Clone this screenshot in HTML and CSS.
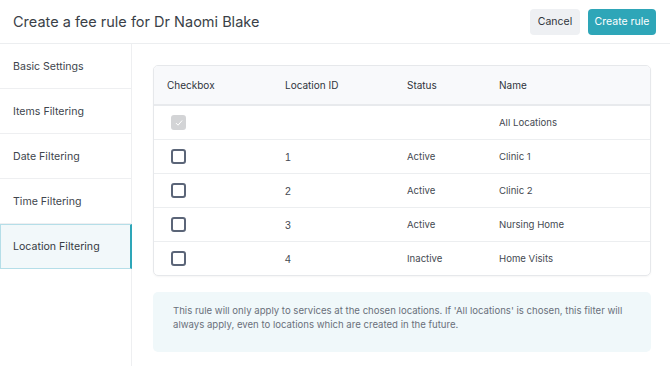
FILE: index.html
```html
<!DOCTYPE html>
<html lang="en">
<head>
    <meta charset="UTF-8">
    <meta name="viewport" content="width=device-width, initial-scale=1.0">
    <title>Create a fee rule</title>
    <link rel="stylesheet" href="styles.css">
</head>
<body>
    <div class="header">
        <h1>Create a fee rule for Dr Naomi Blake</h1>
        <div class="actions">
            <button class="btn btn-cancel">Cancel</button>
            <button class="btn btn-primary">Create rule</button>
        </div>
    </div>

    <div class="layout">
        <div class="sidebar">
            <div class="nav-item">Basic Settings</div>
            <div class="nav-item">Items Filtering</div>
            <div class="nav-item">Date Filtering</div>
            <div class="nav-item">Time Filtering</div>
            <div class="nav-item active">Location Filtering</div>
        </div>

        <div class="main">
            <div class="card">
                <table>
                    <tr>
                        <th class="col-check">Checkbox</th>
                        <th class="col-id">Location ID</th>
                        <th class="col-status">Status</th>
                        <th>Name</th>
                    </tr>
                    <tr>
                        <td><span class="box checked"><svg viewBox="0 0 16 16" width="10" height="10"><path d="M3.5 8.5l3 3 6-7" fill="none" stroke="#fff" stroke-width="1.6" stroke-linecap="round" stroke-linejoin="round"/></svg></span></td>
                        <td></td>
                        <td></td>
                        <td>All Locations</td>
                    </tr>
                    <tr>
                        <td><span class="box"></span></td>
                        <td class="num">1</td>
                        <td>Active</td>
                        <td>Clinic 1</td>
                    </tr>
                    <tr>
                        <td><span class="box"></span></td>
                        <td class="num">2</td>
                        <td>Active</td>
                        <td>Clinic 2</td>
                    </tr>
                    <tr>
                        <td><span class="box"></span></td>
                        <td class="num">3</td>
                        <td>Active</td>
                        <td>Nursing Home</td>
                    </tr>
                    <tr>
                        <td><span class="box"></span></td>
                        <td class="num">4</td>
                        <td>Inactive</td>
                        <td>Home Visits</td>
                    </tr>
                </table>
            </div>

            <div class="info">
                This rule will only apply to services at the chosen locations. If 'All locations' is chosen, this filter will always apply, even to locations which are created in the future.
            </div>
        </div>
    </div>
</body>
</html>
```

FILE: styles.css
```css
body { margin: 0; font-family: Inter, "Open Sans", sans-serif; color: #333a44; background: #fff; }

.header { height: 43px; display: flex; align-items: center; justify-content: space-between; padding: 0 14px 0 13px; border-bottom: 1px solid #eceef0; }
.header h1 { margin: 0; font-size: 14.5px; font-weight: 400; color: #3a3f47; }
.actions { display: flex; gap: 8px; }
.btn { height: 26px; border: none; border-radius: 4px; font-family: inherit; font-size: 10.5px; padding: 0; white-space: nowrap; }
.btn-cancel { background: #eef0f3; color: #2f343b; width: 50px; }
.btn-primary { background: #2ea6b8; color: #fff; width: 68px; }

.layout { display: flex; height: 322px; }
.sidebar { width: 131px; border-right: 1px solid #eeeff1; flex-shrink: 0; }
.nav-item { height: 44px; display: flex; align-items: center; padding-left: 13px; font-size: 10.6px; color: #40454d; border-bottom: 1px solid #eeeff1; }
.nav-item.active { background: #f2f8fa; border: 1px solid #b5dee8; border-right: 2px solid #2ea6b8; margin-right: -1px; height: 43px; padding-left: 12px; color: #363b43; }

.main { flex: 1; padding: 21px 19px 0 21px; }
.card { border: 1px solid #e6e8eb; border-radius: 5px; overflow: hidden; box-shadow: 0 1px 2px rgba(0,0,0,0.04); }
table { width: 100%; border-collapse: collapse; }
th { height: 38px; background: #f8f9fb; text-align: left; font-weight: 400; font-size: 10px; color: #2f343b; border-bottom: 2px solid #e8eaed; padding: 0 0 0 13px; }
td { height: 33px; font-size: 9.6px; color: #454a52; border-bottom: 1px solid #eceef0; padding: 0 0 0 13px; }
tr:last-child td { border-bottom: none; }
.col-check { width: 105px; }
.col-id { width: 109px; }
.col-status { width: 79px; }
td.num { font-family: "Liberation Sans", Arial, sans-serif; font-size: 10.5px; }

.box { display: flex; align-items: center; justify-content: center; width: 11px; height: 11px; border: 2px solid #5b6578; border-radius: 3px; margin-left: 4px; }
.box.checked { background: #d3d4d6; border-color: #d3d4d6; }

.info { margin-top: 16px; background: #f0f8fa; border-radius: 5px; padding: 12px 20px 20px 20px; font-size: 9.6px; line-height: 14px; color: #6a707a; }
```
